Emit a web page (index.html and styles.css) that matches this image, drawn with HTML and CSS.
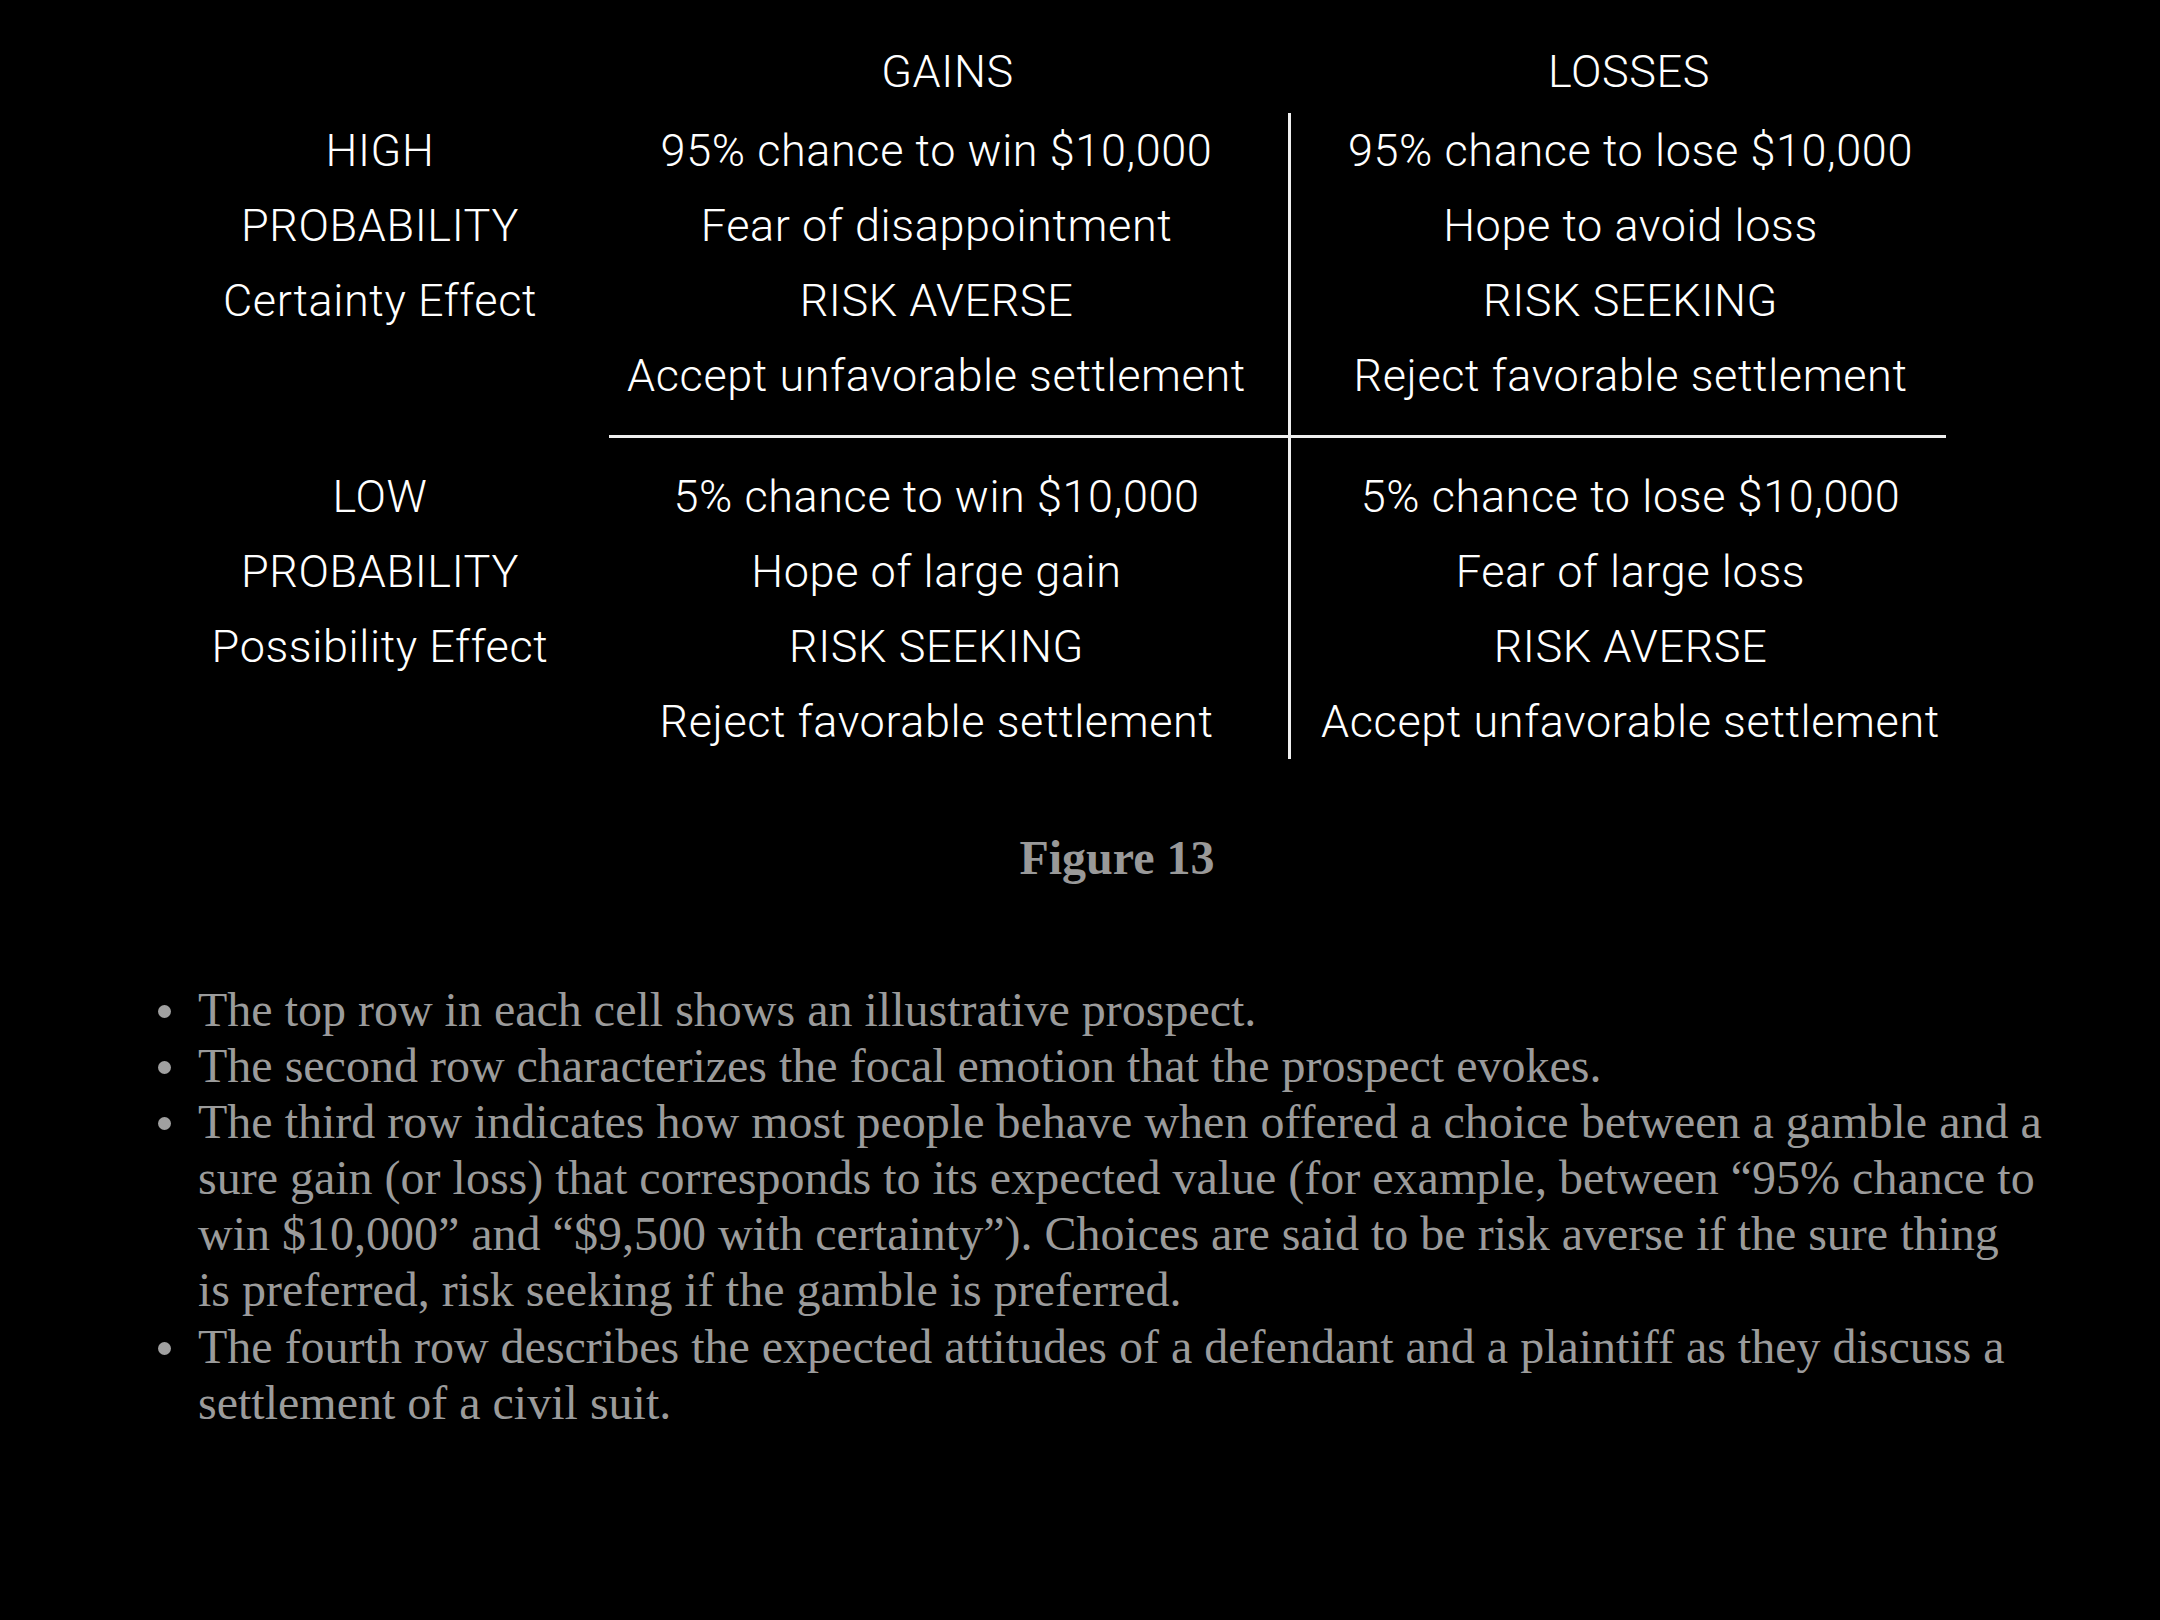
FILE: index.html
```html
<!DOCTYPE html>
<html lang="en">
<head>
<meta charset="utf-8">
<title>Figure 13 – Fourfold pattern</title>
<link rel="stylesheet" href="styles.css">
</head>
<body>
<main class="slide">
  <section class="matrix">
    <div class="matrix-head">
      <div class="head"></div>
      <div class="head head-gains">GAINS</div>
      <div class="head">LOSSES</div>
    </div>
    <div class="matrix-body">
      <div class="label">HIGH</div>
      <div class="cell">95% chance to win $10,000</div>
      <div class="cell loss">95% chance to lose $10,000</div>

      <div class="label">PROBABILITY</div>
      <div class="cell">Fear of disappointment</div>
      <div class="cell loss">Hope to avoid loss</div>

      <div class="label">Certainty Effect</div>
      <div class="cell">RISK AVERSE</div>
      <div class="cell loss">RISK SEEKING</div>

      <div class="label"></div>
      <div class="cell">Accept unfavorable settlement</div>
      <div class="cell loss">Reject favorable settlement</div>

      <div class="label"></div>
      <div class="rule-cell rule-gains"><span class="rule"></span></div>
      <div class="rule-cell rule-losses loss"><span class="rule"></span></div>

      <div class="label">LOW</div>
      <div class="cell">5% chance to win $10,000</div>
      <div class="cell loss">5% chance to lose $10,000</div>

      <div class="label">PROBABILITY</div>
      <div class="cell">Hope of large gain</div>
      <div class="cell loss">Fear of large loss</div>

      <div class="label">Possibility Effect</div>
      <div class="cell">RISK SEEKING</div>
      <div class="cell loss">RISK AVERSE</div>

      <div class="label"></div>
      <div class="cell">Reject favorable settlement</div>
      <div class="cell loss">Accept unfavorable settlement</div>
    </div>
  </section>

  <p class="caption">Figure 13</p>

  <ul class="notes">
    <li>The top row in each cell shows an illustrative prospect.</li>
    <li>The second row characterizes the focal emotion that the prospect evokes.</li>
    <li>The third row indicates how most people behave when offered a choice between a gamble and a<br>sure gain (or loss) that corresponds to its expected value (for example, between “95% chance to<br>win $10,000” and “$9,500 with certainty”). Choices are said to be risk averse if the sure thing<br>is preferred, risk seeking if the gamble is preferred.</li>
    <li>The fourth row describes the expected attitudes of a defendant and a plaintiff as they discuss a settlement of a civil suit.</li>
  </ul>
</main>
</body>
</html>
```

FILE: styles.css
```css
html, body {
  margin: 0;
  padding: 0;
  background: #000;
}

.slide {
  width: 2160px;
  height: 1620px;
  box-sizing: border-box;
  padding-top: 34px;
  overflow: hidden;
}

.matrix {
  margin-left: 175px;
  font-family: Roboto, "Liberation Sans", sans-serif;
  font-weight: 300;
  font-size: 45px;
  letter-spacing: 0.6px;
  color: #fff;
}

.matrix-head,
.matrix-body {
  display: grid;
  grid-template-columns: 410px 703px 682px;
}

.matrix-head {
  grid-template-rows: 75px;
  margin-bottom: 4px;
}

.matrix-body {
  grid-template-rows: repeat(4, 75px) 46px repeat(4, 75px);
}

.head,
.label,
.cell {
  line-height: 75px;
  text-align: center;
  white-space: nowrap;
}

.head-gains {
  padding-left: 22px;
}

.loss {
  border-left: 3px solid #efefef;
}

.rule-cell {
  display: flex;
  align-items: center;
}

.rule {
  flex: 1;
  height: 3px;
  background: #efefef;
}

.rule-gains {
  padding-left: 24px;
}

.rule-losses {
  padding-right: 24px;
}

.caption {
  margin: 71px 0 0;
  padding-left: 74px;
  text-align: center;
  font-family: "Liberation Serif", "Times New Roman", serif;
  font-weight: bold;
  font-size: 48px;
  line-height: 56px;
  color: #999;
}

.notes {
  margin: 96px 0 0;
  padding: 0 100px 0 198px;
  list-style: none;
  font-family: "Liberation Serif", "Times New Roman", serif;
  font-size: 48px;
  line-height: 56.1px;
  color: #9b9b9b;
}

.notes li {
  position: relative;
}

.notes li::before {
  content: "";
  position: absolute;
  left: -40px;
  top: 23px;
  width: 13px;
  height: 13px;
  border-radius: 50%;
  background: #a0a0a0;
}
```
